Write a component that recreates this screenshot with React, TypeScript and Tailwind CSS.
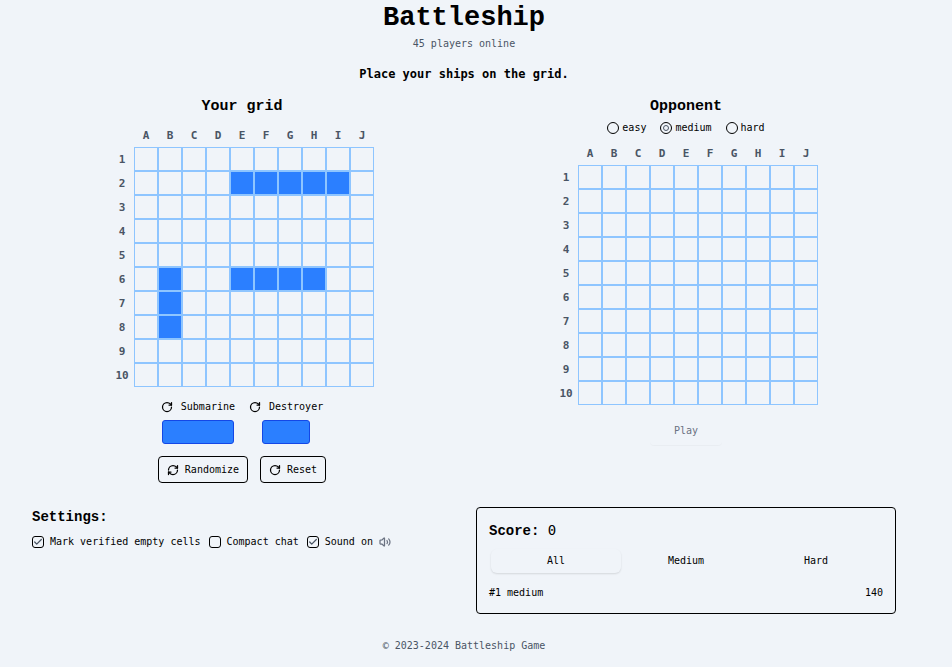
import { useState } from "react";
import type { ReactNode } from "react";
import { Check, RefreshCw, RotateCw, Volume2 } from "lucide-react";

const COLUMNS = ["A", "B", "C", "D", "E", "F", "G", "H", "I", "J"];
const ROWS = [1, 2, 3, 4, 5, 6, 7, 8, 9, 10];
const PLACED = ["E2", "F2", "G2", "H2", "I2", "B6", "B7", "B8", "E6", "F6", "G6", "H6"];
const LEVELS = ["easy", "medium", "hard"];
const TABS = ["All", "Medium", "Hard"];

function Heading({ children }: { children: ReactNode }) {
  return (
    <h2 className="font-['Liberation_Mono',monospace] text-[15px] leading-5 font-bold">{children}</h2>
  );
}

function Board({ label, ships = [] }: { label: string; ships?: string[] }) {
  return (
    <table aria-label={label} className="mr-6 border-separate border-spacing-0 text-[11px] leading-4 text-gray-600">
      <thead>
        <tr>
          <td className="size-6 p-0" />
          {COLUMNS.map((c) => (
            <th key={c} scope="col" className="size-6 p-0 pt-0.5 font-bold">{c}</th>
          ))}
        </tr>
      </thead>
      <tbody>
        {ROWS.map((r) => (
          <tr key={r}>
            <th scope="row" className="size-6 p-0 pt-0.5 font-bold">{r}</th>
            {COLUMNS.map((c) => (
              <td
                key={c}
                className={`size-6 border border-[#8ec5ff] p-0 ${ships.includes(c + r) ? "bg-[#2b7fff]" : ""}`}
              />
            ))}
          </tr>
        ))}
      </tbody>
    </table>
  );
}

function Setting({ label, initial, icon }: { label: string; initial: boolean; icon?: ReactNode }) {
  const [on, setOn] = useState(initial);
  return (
    <label className="flex items-center gap-1.5">
      <span className="grid size-3 place-items-center">
        <input
          type="checkbox"
          checked={on}
          onChange={() => setOn(!on)}
          className="col-start-1 row-start-1 size-3 appearance-none rounded-[3px] border border-black"
        />
        {on && <Check className="pointer-events-none col-start-1 row-start-1 size-2.5 text-gray-600" strokeWidth={3} />}
      </span>
      {label}
      {icon}
    </label>
  );
}

function Ship({ name, size }: { name: string; size: string }) {
  return (
    <div className="flex flex-col items-center gap-[3px]">
      <div className="flex h-5 items-center gap-2">
        <button type="button" aria-label={`Rotate ${name}`}>
          <RotateCw className="size-3" strokeWidth={2.5} />
        </button>
        {name}
      </div>
      <div className={`h-6 rounded-[3px] border border-[#1447e6] bg-[#2b7fff] ${size}`} />
    </div>
  );
}

export default function App() {
  const [level, setLevel] = useState("medium");
  const [tab, setTab] = useState("All");

  return (
    <div className="flex min-h-screen flex-col bg-[#f0f4f9] pr-14 pl-8 font-['DejaVu_Sans_Mono',monospace] text-[10px] leading-4 text-black">
      <header className="flex flex-col items-center">
        <h1 className="font-['Liberation_Mono',monospace] text-[27px] leading-9 font-bold">Battleship</h1>
        <p className="text-gray-600">45 players online</p>
        <p className="mt-3 text-[12px] leading-5 font-bold">Place your ships on the grid.</p>
      </header>

      <main className="mt-[13px] grid grid-cols-2 gap-x-6">
        <section className="flex flex-col items-center">
          <Heading>Your grid</Heading>
          <div className="mt-1.5 ml-6">
            <Board label="Your grid" ships={PLACED} />
          </div>
          <div className="mt-2.5 flex gap-3.5">
            <Ship name="Submarine" size="w-18" />
            <Ship name="Destroyer" size="w-12" />
          </div>
          <div className="mt-3 flex gap-3">
            <button type="button" className="flex h-[27px] items-center gap-1.5 rounded border border-black px-2">
              <RefreshCw className="size-3" strokeWidth={2.5} />
              Randomize
            </button>
            <button type="button" className="flex h-[27px] items-center gap-1.5 rounded border border-black px-2">
              <RotateCw className="size-3" strokeWidth={2.5} />
              Reset
            </button>
          </div>
        </section>

        <section className="flex flex-col items-center">
          <Heading>Opponent</Heading>
          <div className="mt-[3px] flex gap-3.5">
            {LEVELS.map((l) => (
              <label key={l} className="flex items-center gap-[3px]">
                <input
                  type="radio"
                  name="level"
                  checked={level === l}
                  onChange={() => setLevel(l)}
                  className="grid size-3 appearance-none place-content-center rounded-full border border-black checked:before:size-1.5 checked:before:rounded-full checked:before:border checked:before:border-gray-600 checked:before:content-['']"
                />
                {l}
              </label>
            ))}
          </div>
          <div className="mt-[5px] ml-6">
            <Board label="Opponent grid" />
          </div>
          <button type="button" disabled className="mt-3 h-7 w-18 rounded text-gray-500 shadow-[0_1px_1px_rgba(0,0,0,0.03)]">
            Play
          </button>
        </section>
      </main>

      <div className="mt-6 grid grid-cols-2 gap-x-6">
        <section>
          <h2 className="font-['Liberation_Mono',monospace] text-[14px] leading-5 font-bold">Settings:</h2>
          <div className="mt-[7px] flex gap-2 whitespace-nowrap">
            <Setting label="Mark verified empty cells" initial={true} />
            <Setting label="Compact chat" initial={false} />
            <Setting label="Sound on" initial={true} icon={<Volume2 className="size-3 text-gray-500" strokeWidth={2.5} />} />
          </div>
        </section>

        <section className="rounded border border-black p-3">
          <h2 className="font-['Liberation_Mono',monospace] text-[14px] leading-5 font-bold">
            Score: <span className="font-['DejaVu_Sans_Mono',monospace] font-normal">0</span>
          </h2>
          <div className="mt-2 grid grid-cols-3 px-0.5">
            {TABS.map((t) => (
              <button
                key={t}
                type="button"
                onClick={() => setTab(t)}
                className={`h-6 rounded-md ${tab === t ? "shadow-[0_1px_2px_rgba(0,0,0,0.12)]" : ""}`}
              >
                {t}
              </button>
            ))}
          </div>
          <div className="mt-3 flex justify-between">
            <span>#1 medium</span>
            <span>140</span>
          </div>
        </section>
      </div>

      <footer className="mt-6 text-center text-gray-600">© 2023-2024 Battleship Game</footer>
    </div>
  );
}
